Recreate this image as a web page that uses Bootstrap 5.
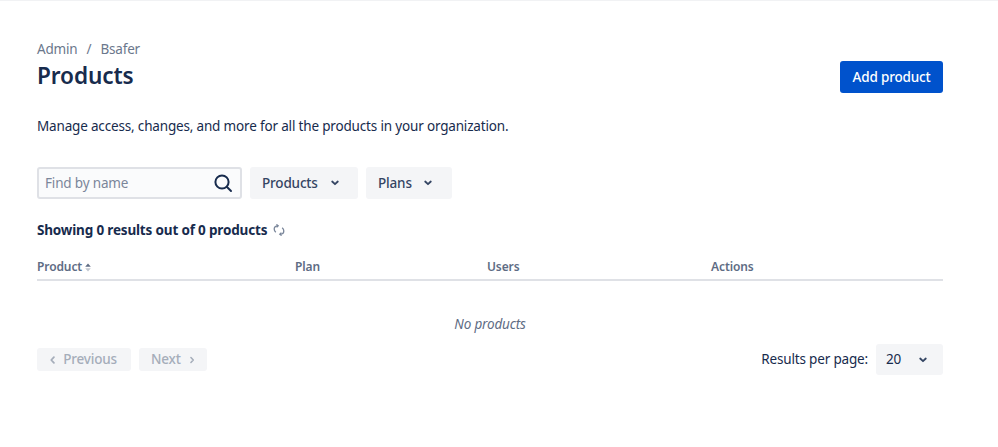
<!DOCTYPE html>
<html lang="en">
<head>
  <meta charset="UTF-8" />
  <title>Products</title>
  <link href="https://cdn.jsdelivr.net/npm/bootstrap@5.3.0/dist/css/bootstrap.min.css" rel="stylesheet" />
  <style>
    body { font-family: "Noto Sans", sans-serif; font-size: 13.5px; letter-spacing: -0.17px; color: #172b4d; background: #fff; }
    .page-wrap { border-top: 1px solid #f1f2f4; padding: 40px 55px 0 37px; }
    .crumbs { margin: 0; height: 17px; line-height: 17px; color: #6b778c; }
    .crumbs .breadcrumb-item + .breadcrumb-item { padding-left: 9px; }
    .crumbs .breadcrumb-item + .breadcrumb-item::before { color: #6b778c; padding-right: 9px; }
    .crumbs a { color: #6b778c; text-decoration: none; }
    .title-row { height: 32px; margin-top: 3px; }
    .title-row h1 { font-size: 22.6px; line-height: 28px; font-weight: 600; letter-spacing: -0.1px; color: #172b4d; margin: 0 0 2px; }
    .btn-add { background: #0052cc; color: #fff; font-weight: 500; font-size: 13.5px; letter-spacing: -0.17px; height: 32px; width: 103px; padding: 0; border: 0; border-radius: 3px; }
    .intro { margin: 23px 0 0; line-height: 20px; }
    .filters { margin-top: 31px; }
    .search-box { width: 205px; height: 32px; background: #fafbfc; border: 2px solid #dfe1e6; border-radius: 3px; padding: 0 7px 0 6px; }
    .search-box input { border: 0; background: transparent; outline: 0; flex: 1; min-width: 0; padding: 0; font-size: 13.5px; letter-spacing: -0.17px; color: #172b4d; }
    .search-box input::placeholder { color: #7a869a; opacity: 1; }
    .btn-soft { background: #f4f5f7; color: #344563; border: 0; border-radius: 3px; font-weight: 500; font-size: 13.5px; letter-spacing: -0.17px; height: 32px; padding: 0 12px; }
    .btn-soft:disabled { background: #f4f5f7; color: #a5adba; opacity: 1; }
    .btn-products { width: 108px; padding-right: 18px; }
    .btn-plans { width: 86px; padding-right: 19px; }
    .btn-prev { width: 94px; height: 23px; gap: 7px; padding-right: 14px; }
    .btn-next { width: 68px; height: 23px; }
    .btn-per-page { width: 67px; height: 31px; padding: 0 15px 0 10px; color: #172b4d; font-weight: 400; }
    .result-count { margin-top: 21px; line-height: 20px; font-weight: 700; }
    .result-count svg { margin-left: 6px; }
    .prod-table { margin: 17px 0 0; width: 906px; table-layout: fixed; }
    .prod-table th { padding: 0 0 4px; height: 23px; font-size: 12px; line-height: 16px; font-weight: 600; letter-spacing: -0.1px; color: #5e6c84; border-bottom: 2px solid #dfe1e6; vertical-align: bottom; }
    .prod-table td { padding: 33px 0 14px; height: 67px; line-height: 20px; border: 0; text-align: center; font-style: italic; color: #5e6c84; }
    .pager-row { height: 31px; margin-top: -4px; }
    .col-product { width: 258px; }
    .col-plan { width: 192px; }
    .col-users { width: 224px; }
  </style>
</head>
<body>
  <div class="page-wrap">
    <nav aria-label="breadcrumb">
      <ol class="breadcrumb crumbs">
        <li class="breadcrumb-item"><a href="#">Admin</a></li>
        <li class="breadcrumb-item active text-reset">Bsafer</li>
      </ol>
    </nav>

    <div class="title-row d-flex justify-content-between align-items-center">
      <h1>Products</h1>
      <button class="btn btn-add">Add product</button>
    </div>

    <p class="intro">Manage access, changes, and more for all the products in your organization.</p>

    <!-- Filters -->
    <div class="filters d-flex gap-2">
      <div class="search-box d-flex align-items-center">
        <input type="text" placeholder="Find by name" />
        <svg width="20" height="20" viewBox="0 0 20 20" fill="none" stroke="#172b4d" stroke-width="2" stroke-linecap="round"><circle cx="9" cy="9" r="6.6" /><path d="M14 14l4 4" /></svg>
      </div>
      <button class="btn btn-soft btn-products d-flex align-items-center justify-content-between">Products
        <svg width="10" height="8" viewBox="0 0 10 8" fill="none" stroke="#344563" stroke-width="1.800" stroke-linecap="round" stroke-linejoin="round"><path d="M2.200 2.500L5 5.200l2.800-2.700" /></svg>
      </button>
      <button class="btn btn-soft btn-plans d-flex align-items-center justify-content-between">Plans
        <svg width="10" height="8" viewBox="0 0 10 8" fill="none" stroke="#344563" stroke-width="1.800" stroke-linecap="round" stroke-linejoin="round"><path d="M2.200 2.500L5 5.200l2.800-2.700" /></svg>
      </button>
    </div>

    <div class="result-count d-flex align-items-center">Showing 0 results out of 0 products
      <svg width="12" height="12" viewBox="0 0 12 12" fill="none" stroke="#7a869a" stroke-width="1.300"><path d="M5 1.800C3 1.800 1.200 3 1.200 5c0 1.300.6 2.300 1.600 3.200" /><path d="M7 10.200c2 0 3.800-1.200 3.800-3.200 0-1.300-.6-2.300-1.600-3.200" /><path d="M3.400 .4L5.200 1.800 3.600 3.400M8.600 11.600L6.800 10.200 8.400 8.600" /></svg>
    </div>

    <table class="table prod-table">
      <thead>
        <tr>
          <th class="col-product">Product
            <svg width="6" height="9" viewBox="0 0 6 9"><path d="M3 .6L5.800 3.800H.2z" fill="#5e6c84" /><path d="M3 8.400L.2 5.200h5.600z" fill="#c1c7d0" /></svg>
          </th>
          <th class="col-plan">Plan</th>
          <th class="col-users">Users</th>
          <th>Actions</th>
        </tr>
      </thead>
      <tbody>
        <tr><td colspan="4">No products</td></tr>
      </tbody>
    </table>

    <!-- Pagination -->
    <div class="pager-row d-flex justify-content-between align-items-center">
      <div class="d-flex gap-2">
        <button class="btn btn-soft btn-prev d-flex align-items-center justify-content-center" disabled>
          <svg width="8" height="10" viewBox="0 0 8 10" fill="none" stroke="#a5adba" stroke-width="2" stroke-linecap="round" stroke-linejoin="round"><path d="M5.500 1.800L2.500 5l3 3.200" /></svg>
          Previous
        </button>
        <button class="btn btn-soft btn-next d-flex align-items-center justify-content-center gap-2" disabled>
          Next
          <svg width="8" height="10" viewBox="0 0 8 10" fill="none" stroke="#a5adba" stroke-width="2" stroke-linecap="round" stroke-linejoin="round"><path d="M2.500 1.800L5.500 5l-3 3.200" /></svg>
        </button>
      </div>
      <div class="d-flex align-items-center gap-2">
        <span>Results per page:</span>
        <button class="btn btn-soft btn-per-page d-flex align-items-center justify-content-between">20
          <svg width="10" height="8" viewBox="0 0 10 8" fill="none" stroke="#344563" stroke-width="1.800" stroke-linecap="round" stroke-linejoin="round"><path d="M2.200 2.500L5 5.200l2.800-2.700" /></svg>
        </button>
      </div>
    </div>
  </div>

  <script src="https://cdn.jsdelivr.net/npm/bootstrap@5.3.0/dist/js/bootstrap.bundle.min.js"></script>
</body>
</html>
